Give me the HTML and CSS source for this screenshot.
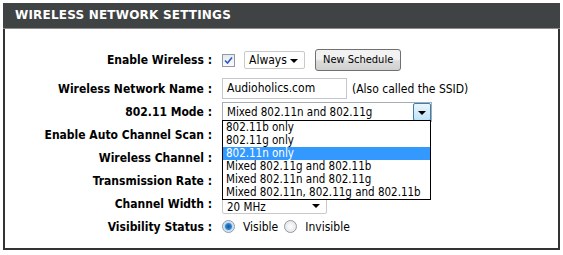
FILE: index.html
```html
<!DOCTYPE html>
<html lang="en">
<head>
    <meta charset="UTF-8">
    <title>Wireless Network Settings</title>
    <link rel="stylesheet" href="styles.css">
</head>
<body>
    <div class="box">
        <div class="box-header">WIRELESS NETWORK SETTINGS</div>

        <div class="form">
            <!-- Enable Wireless -->
            <div class="row first">
                <div class="label">Enable Wireless :</div>
                <div class="field">
                    <span class="checkbox checked">
                        <svg width="9" height="9" viewBox="0 0 9 9"><path d="M1 4.5 L3.5 7 L8 1.5" fill="none" stroke="#2a5bc4" stroke-width="1.6"/></svg>
                    </span>
                    <div class="select select-always">Always<span class="arrow"></span></div>
                    <div class="button">New Schedule</div>
                </div>
            </div>

            <div class="row">
                <div class="label">Wireless Network Name :</div>
                <div class="field">
                    <div class="textbox">Audioholics.com</div>
                    <span class="note">(Also called the SSID)</span>
                </div>
            </div>

            <div class="row">
                <div class="label">802.11 Mode :</div>
                <div class="field">
                    <div class="select select-mode">Mixed 802.11n and 802.11g<span class="drop-btn"><span class="arrow"></span></span></div>
                </div>
            </div>

            <div class="row">
                <div class="label">Enable Auto Channel Scan :</div>
                <div class="field"></div>
            </div>

            <div class="row">
                <div class="label">Wireless Channel :</div>
                <div class="field"></div>
            </div>

            <div class="row">
                <div class="label">Transmission Rate :</div>
                <div class="field"></div>
            </div>

            <div class="row">
                <div class="label">Channel Width :</div>
                <div class="field">
                    <div class="select select-width">20 MHz<span class="arrow"></span></div>
                </div>
            </div>

            <div class="row">
                <div class="label">Visibility Status :</div>
                <div class="field">
                    <span class="radio checked"></span>
                    <span class="radio-text">Visible</span>
                    <span class="radio"></span>
                    <span class="radio-text">Invisible</span>
                </div>
            </div>

            <!-- opened list of the 802.11 Mode select -->
            <ul class="dropdown">
                <li>802.11b only</li>
                <li>802.11g only</li>
                <li class="selected">802.11n only</li>
                <li>Mixed 802.11g and 802.11b</li>
                <li>Mixed 802.11n and 802.11g</li>
                <li>Mixed 802.11n, 802.11g and 802.11b</li>
            </ul>
        </div>
    </div>
</body>
</html>
```

FILE: styles.css
```css
body {
    margin: 3px;
    background-color: #ffffff;
    color: #000000;
    font-family: "DejaVu Sans Condensed", "DejaVu Sans", sans-serif;
    font-stretch: condensed;
    font-size: 12px;
}

.box {
    width: 553px;
    height: 245px;
    border: 2px solid #333333;
    border-top: none;
}

.box-header {
    height: 25px;
    margin: 0 -2px;
    padding-left: 12px;
    background-color: #404343;
    border-bottom: 1px solid #8c8c8c;
    color: #ffffff;
    font-family: "DejaVu Sans", sans-serif;
    font-stretch: normal;
    font-weight: bold;
    font-size: 12px;
    letter-spacing: 0.2px;
    line-height: 25px;
}

.form {
    position: relative;
    padding-top: 18px;
}

.row {
    display: flex;
    align-items: center;
    height: 23px;
}
.row.first {
    height: 26px;
    margin-bottom: 4px;
}

.label {
    width: 207px;
    text-align: right;
    font-weight: bold;
    font-size: 12px;
    padding-right: 10px;
    white-space: nowrap;
}

.field {
    display: flex;
    align-items: center;
    gap: 8px;
}

.checkbox {
    width: 11px;
    height: 11px;
    border: 1px solid #8f9aa6;
    background: linear-gradient(#e6e9ec, #fbfbfb);
    display: flex;
    align-items: center;
    justify-content: center;
}

.select {
    position: relative;
    height: 16px;
    line-height: 16px;
    border: 1px solid #c9c9c9;
    border-radius: 2px;
    background-color: #ffffff;
    padding-left: 4px;
    font-size: 11.5px;
}
.select .arrow {
    position: absolute;
    right: 6px;
    top: 7px;
    width: 0;
    height: 0;
    border-left: 4px solid transparent;
    border-right: 4px solid transparent;
    border-top: 4px solid #000000;
}
.select-always {
    width: 55px;
    margin-left: 1px;
    font-size: 12px;
}
.select-width {
    width: 99px;
    height: 15px;
    line-height: 18px;
    margin-top: 3px;
    overflow: hidden;
}
.select-width .arrow { top: 6px; }

.select-mode {
    width: 204px;
    height: 18px;
    line-height: 18px;
    border-color: #a5acb2;
    border-radius: 0;
}
.drop-btn {
    position: absolute;
    right: 0;
    top: 0;
    width: 16px;
    height: 16px;
    border: 1px solid #3c7fb1;
    border-radius: 2px;
    background: linear-gradient(#eaf6fd, #bfe3f8);
}
.drop-btn .arrow {
    right: 4px;
    top: 7px;
}

.button {
    height: 20px;
    line-height: 20px;
    padding: 0 7px;
    margin-left: 2px;
    border: 1px solid #707070;
    border-radius: 3px;
    font-size: 11px;
    background: linear-gradient(#f2f2f2 45%, #dcdcdc 55%, #d0d0d0);
}

.textbox {
    width: 119px;
    height: 19px;
    line-height: 19px;
    padding-left: 4px;
    border: 1px solid #c4c8cc;
}
.note {
    margin-left: -3px;
}

.radio {
    width: 11px;
    height: 11px;
    border: 1px solid #8f9aa6;
    border-radius: 50%;
    background: radial-gradient(#ffffff, #dcdcdc);
}
.radio.checked {
    background: radial-gradient(circle, #1b4f96 0, #2f8ad8 3px, #bcd8ef 4px, #f3f3f3 6px);
}
.radio-text {
    margin-right: -2px;
}

.dropdown {
    position: absolute;
    left: 217px;
    top: 91px;
    width: 207px;
    margin: 0;
    padding: 0;
    list-style: none;
    border: 1px solid #000000;
    background-color: #ffffff;
    font-size: 11.5px;
}
.dropdown li {
    height: 13px;
    line-height: 13px;
    padding-left: 3px;
    white-space: nowrap;
}
.dropdown li.selected {
    background-color: #3399ff;
    color: #ffffff;
}
```
